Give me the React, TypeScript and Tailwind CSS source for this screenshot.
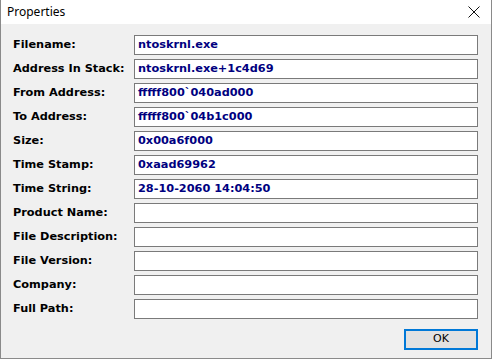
import React from "react";

const rows: [string, string][] = [
  ["Filename:", "ntoskrnl.exe"],
  ["Address In Stack:", "ntoskrnl.exe+1c4d69"],
  ["From Address:", "fffff800`040ad000"],
  ["To Address:", "fffff800`04b1c000"],
  ["Size:", "0x00a6f000"],
  ["Time Stamp:", "0xaad69962"],
  ["Time String:", "28-10-2060 14:04:50"],
  ["Product Name:", ""],
  ["File Description:", ""],
  ["File Version:", ""],
  ["Company:", ""],
  ["Full Path:", ""],
];

export default function App() {
  return (
    <div className="w-[494px] h-[361px] bg-white overflow-hidden">
      <div className="w-[492px] h-[359px] border border-[#8a8a8a] border-t-0 flex flex-col bg-[#f0f0f0]">
        <div className="h-[24px] bg-white flex items-center justify-between pl-[6px] pr-[10px] shrink-0">
          <span
            className="text-[12px] text-black"
            style={{ fontFamily: '"Noto Sans", "Open Sans", sans-serif' }}
          >
            Properties
          </span>
          <svg width="12" height="12" viewBox="0 0 12 12" className="mr-[1px]">
            <path d="M0.5 0.5 L11.5 11.5 M11.5 0.5 L0.5 11.5" stroke="#111" strokeWidth="1" />
          </svg>
        </div>
        <div className="flex flex-col pt-[11px] pl-[12px] gap-[4px]">
          {rows.map(([label, value]) => (
            <div key={label} className="flex items-center h-[20px]">
              <div
                className="w-[121px] text-[11.3px] font-bold text-black"
                style={{ fontFamily: '"DejaVu Sans", sans-serif' }}
              >
                {label}
              </div>
              <div
                className="w-[344px] h-[20px] bg-white border border-[#7a7a7a] flex items-center pl-[3px] text-[11.3px] font-bold text-[#000080] leading-none"
                style={{ fontFamily: '"DejaVu Sans", sans-serif' }}
              >
                {value}
              </div>
            </div>
          ))}
        </div>
        <div className="flex justify-end pr-[13px] pt-[10px]">
          <div
            className="w-[74px] h-[21px] bg-[#e1e1e1] border-2 border-[#0078d7] flex items-center justify-center text-[11px] text-black"
            style={{ fontFamily: '"DejaVu Sans", sans-serif' }}
          >
            OK
          </div>
        </div>
      </div>
    </div>
  );
}
